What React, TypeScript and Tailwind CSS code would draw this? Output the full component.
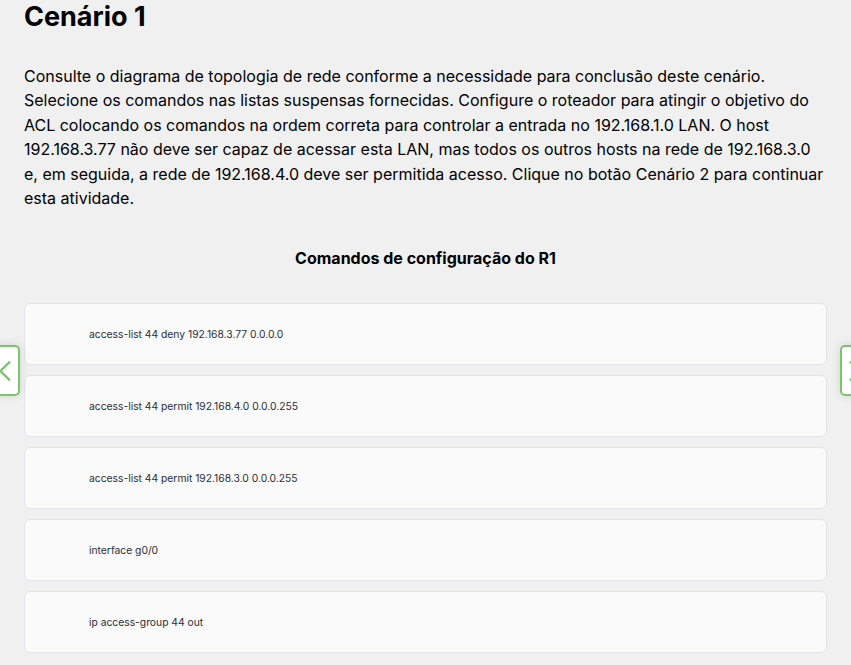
const commands = [
  'access-list 44 deny 192.168.3.77 0.0.0.0',
  'access-list 44 permit 192.168.4.0 0.0.0.255',
  'access-list 44 permit 192.168.3.0 0.0.0.255',
  'interface g0/0',
  'ip access-group 44 out',
];

export default function App() {
  return (
    <div className="relative min-h-[665px] overflow-hidden bg-[#f0f0f0] font-['Inter','Liberation_Sans',sans-serif] text-black">
      <div className="px-6">
        <h1 className="pt-[1px] text-[27px] font-bold leading-[32px]">Cenário 1</h1>

        <p className="mt-[31px] text-[16px] leading-[24.4px]">
          Consulte o diagrama de topologia de rede conforme a necessidade para conclusão deste cenário.
          Selecione os comandos nas listas suspensas fornecidas. Configure o roteador para atingir o objetivo do
          ACL colocando os comandos na ordem correta para controlar a entrada no 192.168.1.0 LAN. O host
          192.168.3.77 não deve ser capaz de acessar esta LAN, mas todos os outros hosts na rede de 192.168.3.0
          e, em seguida, a rede de 192.168.4.0 deve ser permitida acesso. Clique no botão Cenário 2 para continuar
          esta atividade.
        </p>

        <h2 className="mt-[36px] text-center text-[16px] font-bold leading-[24px]">
          Comandos de configuração do R1
        </h2>

        {/* Command cards */}
        <div className="mt-[33px] flex flex-col gap-[10px]">
          {commands.map((cmd) => (
            <div
              key={cmd}
              className="flex h-[62px] items-center rounded-md border border-[#e1e3e7] bg-[#fafafa] pl-[64px] text-[10.3px] text-[#2a2d36]"
            >
              {cmd}
            </div>
          ))}
        </div>
      </div>

      {/* Side navigation buttons */}
      <button className="absolute left-[-22px] top-[345px] flex h-[51px] w-[42px] items-center justify-end rounded-[5px] border-2 border-[#7cc56c] bg-white pr-[7px] shadow-[0_0_10px_rgba(0,0,0,0.12)]">
        <svg width="12" height="22" viewBox="0 0 12 22" fill="none">
          <path d="M11 1.5 L1.5 11 L11 20.5" stroke="#7cc56c" strokeWidth="2.4" />
        </svg>
      </button>
      <button className="absolute left-[840px] top-[345px] flex h-[51px] w-[42px] items-center justify-start rounded-[5px] border-2 border-[#7cc56c] bg-white pl-[7px] shadow-[0_0_10px_rgba(0,0,0,0.12)]">
        <svg width="12" height="22" viewBox="0 0 12 22" fill="none">
          <path d="M1 1.5 L10.5 11 L1 20.5" stroke="#7cc56c" strokeWidth="2.4" />
        </svg>
      </button>
    </div>
  );
}
